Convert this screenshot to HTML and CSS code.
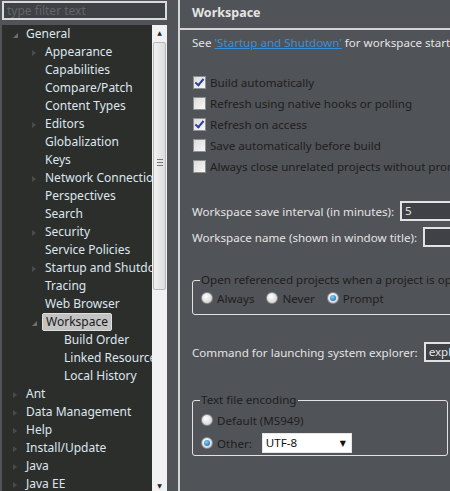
FILE: index.html
```html
<!DOCTYPE html>
<html lang="en">
<head>
    <meta charset="UTF-8">
    <title>Preferences - Workspace</title>
    <link rel="stylesheet" href="styles.css">
</head>
<body>
    <div class="window">
        <div class="nav">
            <div class="filter"><span class="placeholder">type filter text</span></div>
            <div class="tree-box">
                <ul class="tree">
                    <li class="lvl0 open">General</li>
                    <li class="lvl1 closed">Appearance</li>
                    <li class="lvl1">Capabilities</li>
                    <li class="lvl1">Compare/Patch</li>
                    <li class="lvl1">Content Types</li>
                    <li class="lvl1 closed">Editors</li>
                    <li class="lvl1">Globalization</li>
                    <li class="lvl1">Keys</li>
                    <li class="lvl1 closed">Network Connections</li>
                    <li class="lvl1">Perspectives</li>
                    <li class="lvl1">Search</li>
                    <li class="lvl1 closed">Security</li>
                    <li class="lvl1">Service Policies</li>
                    <li class="lvl1 closed">Startup and Shutdown</li>
                    <li class="lvl1">Tracing</li>
                    <li class="lvl1">Web Browser</li>
                    <li class="lvl1 open"><span class="selected">Workspace</span></li>
                    <li class="lvl2">Build Order</li>
                    <li class="lvl2">Linked Resources</li>
                    <li class="lvl2">Local History</li>
                    <li class="lvl0 closed">Ant</li>
                    <li class="lvl0 closed">Data Management</li>
                    <li class="lvl0 closed">Help</li>
                    <li class="lvl0 closed">Install/Update</li>
                    <li class="lvl0 closed">Java</li>
                    <li class="lvl0 closed">Java EE</li>
                </ul>
                <div class="scrollbar">
                    <div class="sb-btn up">&#9650;</div>
                    <div class="sb-thumb"><span class="grip"></span></div>
                    <div class="sb-track"></div>
                    <div class="sb-btn down">&#9660;</div>
                </div>
            </div>
        </div>
        <div class="divider"></div>
        <div class="page">
            <div class="page-title">Workspace</div>
            <div class="page-body">
                <p class="intro">See <a href="#">'Startup and Shutdown'</a> for workspace startup and shutdown preferences.</p>

                <div class="checks">
                    <div class="check"><span class="box on"></span>Build automatically</div>
                    <div class="check"><span class="box"></span>Refresh using native hooks or polling</div>
                    <div class="check"><span class="box on"></span>Refresh on access</div>
                    <div class="check"><span class="box"></span>Save automatically before build</div>
                    <div class="check"><span class="box"></span>Always close unrelated projects without prompt</div>
                </div>

                <div class="field first"><span class="label">Workspace save interval (in minutes):</span><span class="input">5</span></div>
                <div class="field"><span class="label">Workspace name (shown in window title):</span><span class="input"></span></div>

                <fieldset class="group open-refs">
                    <legend>Open referenced projects when a project is opened</legend>
                    <div class="radios">
                        <span class="radio"><span class="dot"></span>Always</span>
                        <span class="radio"><span class="dot"></span>Never</span>
                        <span class="radio"><span class="dot on"></span>Prompt</span>
                    </div>
                </fieldset>

                <div class="field explorer"><span class="label">Command for launching system explorer:</span><span class="input">explorer /E,/select=${selected_resource_loc}</span></div>

                <fieldset class="group encoding">
                    <legend>Text file encoding</legend>
                    <div class="radio-row"><span class="radio"><span class="dot"></span>Default (MS949)</span></div>
                    <div class="radio-row other">
                        <span class="radio"><span class="dot on"></span>Other:</span>
                        <span class="combo">UTF-8<span class="arrow">&#9660;</span></span>
                    </div>
                </fieldset>
            </div>
        </div>
    </div>
</body>
</html>
```

FILE: styles.css
```css
body {
    margin: 0;
    font-family: "Noto Sans", "DejaVu Sans", sans-serif;
    font-size: 12px;
    background-color: #505357;
    overflow: hidden;
}
.window {
    display: flex;
    width: 450px;
    height: 491px;
    overflow: hidden;
}

/* left side: filter + tree */
.nav {
    width: 178px;
    flex: none;
    background-color: #505357;
    padding: 1px 0 0 2px;
    box-sizing: border-box;
}
.filter {
    width: 165px;
    height: 19px;
    box-sizing: border-box;
    border: 2px solid #dadada;
    background-color: #3e4145;
    line-height: 15px;
    padding-left: 3px;
}
.placeholder {
    color: #626569;
}
.tree-box {
    display: flex;
    margin-top: 5px;
    height: 470px;
}
.tree {
    list-style: none;
    margin: 0;
    padding: 0;
    width: 150px;
    background-color: #2c2e2c;
    overflow: hidden;
    white-space: nowrap;
}
.tree li {
    height: 18px;
    line-height: 18px;
    color: #dde6ef;
    position: relative;
}
.tree .lvl0 { padding-left: 24px; }
.tree .lvl1 { padding-left: 43px; }
.tree .lvl2 { padding-left: 62px; }
.tree .closed::before,
.tree .open::before {
    content: "";
    position: absolute;
    width: 0;
    height: 0;
}
.tree .closed::before {
    border-top: 3px solid transparent;
    border-bottom: 3px solid transparent;
    border-left: 4px solid #4a4c4a;
    top: 7px;
}
.tree .open::before {
    border-bottom: 5px solid #6e706e;
    border-left: 5px solid transparent;
    top: 8px;
}
.tree .lvl0::before { left: 11px; }
.tree .lvl1::before { left: 30px; }
.selected {
    display: inline-block;
    background-color: #c3c3c3;
    border: 1px solid #dedede;
    border-radius: 2px;
    color: #1a1a1a;
    line-height: 16px;
    padding: 0 3px;
    margin-left: -3px;
}

.scrollbar {
    width: 15px;
    display: flex;
    flex-direction: column;
    background-color: #f1f0f3;
}
.sb-btn {
    height: 17px;
    font-size: 6px;
    line-height: 17px;
    text-align: center;
    color: #222;
}
.sb-thumb {
    height: 248px;
    margin: 0 1px;
    background: linear-gradient(to right, #f2f2f2, #dcdcdc);
    border: 1px solid #b8b8b8;
    border-radius: 2px;
    box-sizing: border-box;
    position: relative;
}
.grip {
    position: absolute;
    left: 3px;
    top: 116px;
    width: 6px;
    height: 5px;
    border-top: 1px solid #777;
    border-bottom: 1px solid #777;
}
.grip::after {
    content: "";
    position: absolute;
    left: 0;
    top: 2px;
    width: 6px;
    border-top: 1px solid #777;
}
.sb-track {
    flex: 1;
}

.divider {
    width: 2px;
    flex: none;
    background-color: #d4d4d4;
}

/* right side: preference page */
.page {
    flex: 1;
    min-width: 0;
    white-space: nowrap;
    color: #e4e4e4;
    font-size: 11.6px;
}
.page-title {
    height: 28px;
    line-height: 26px;
    padding-left: 12px;
    font-weight: bold;
    font-size: 12.5px;
    border-bottom: 2px solid #d4d4d4;
}
.page-body {
    padding-left: 12px;
}
.intro {
    margin: 5px 0 0;
    line-height: 16px;
}
.intro a {
    color: #3a8fd9;
    text-decoration: underline;
}
.checks {
    margin-top: 21px;
}
.check {
    height: 21px;
    line-height: 21px;
    color: #1e1e1e;
    display: flex;
    align-items: center;
}
.box {
    flex: none;
    width: 13px;
    height: 13px;
    box-sizing: border-box;
    border: 1px solid #8e8f8f;
    background: linear-gradient(135deg, #dcdcdc, #f7f7f7);
    margin: 0 4px 0 1px;
    position: relative;
}
.box.on::after {
    content: "";
    position: absolute;
    left: 3px;
    top: 0;
    width: 3px;
    height: 7px;
    border-right: 2px solid #2a3ea0;
    border-bottom: 2px solid #2a3ea0;
    transform: rotate(40deg);
}

.field {
    display: flex;
    align-items: center;
    height: 20px;
    margin-top: 6px;
}
.field.first {
    margin-top: 24px;
}
.label {
    flex: none;
    margin-right: 6px;
}
.input {
    flex: none;
    width: 200px;
    height: 20px;
    box-sizing: border-box;
    border: 2px solid #e2e2e2;
    background-color: #3e4145;
    padding-left: 3px;
    line-height: 16px;
    overflow: hidden;
}

.group {
    border: 1px solid #e2e2e2;
    border-radius: 3px;
    margin: 0;
    padding: 0 8px;
    color: #1e1e1e;
}
.group legend {
    padding: 0 1px;
    line-height: 16px;
    margin-left: -1px;
}
.open-refs {
    margin-top: 25px;
    width: 300px;
    height: 43px;
    box-sizing: border-box;
}
.radios {
    display: flex;
    gap: 12px;
    height: 20px;
    align-items: center;
}
.radio {
    display: inline-flex;
    align-items: center;
}
.dot {
    flex: none;
    width: 12px;
    height: 12px;
    border-radius: 50%;
    box-sizing: border-box;
    border: 1px solid #8a8a8a;
    background: radial-gradient(circle at 40% 35%, #ffffff, #c9c9c9);
    margin-right: 4px;
    position: relative;
}
.dot.on::after {
    content: "";
    position: absolute;
    left: 2px;
    top: 2px;
    width: 6px;
    height: 6px;
    border-radius: 50%;
    background: radial-gradient(circle at 40% 35%, #7fd0ff, #0a5ea8);
}

.explorer {
    margin-top: 27px;
}
.encoding {
    margin-top: 30px;
    width: 256px;
    height: 64px;
    box-sizing: border-box;
    padding-top: 1px;
}
.radio-row {
    display: flex;
    align-items: center;
    height: 22px;
}
.radio-row.other {
    height: 24px;
}
.combo {
    margin-left: 10px;
    width: 90px;
    height: 20px;
    box-sizing: border-box;
    border: 1px solid #e6e6e6;
    background-color: #ffffff;
    color: #111;
    line-height: 18px;
    padding-left: 3px;
    position: relative;
}
.arrow {
    position: absolute;
    right: 5px;
    top: 0;
    font-size: 8px;
}
```
